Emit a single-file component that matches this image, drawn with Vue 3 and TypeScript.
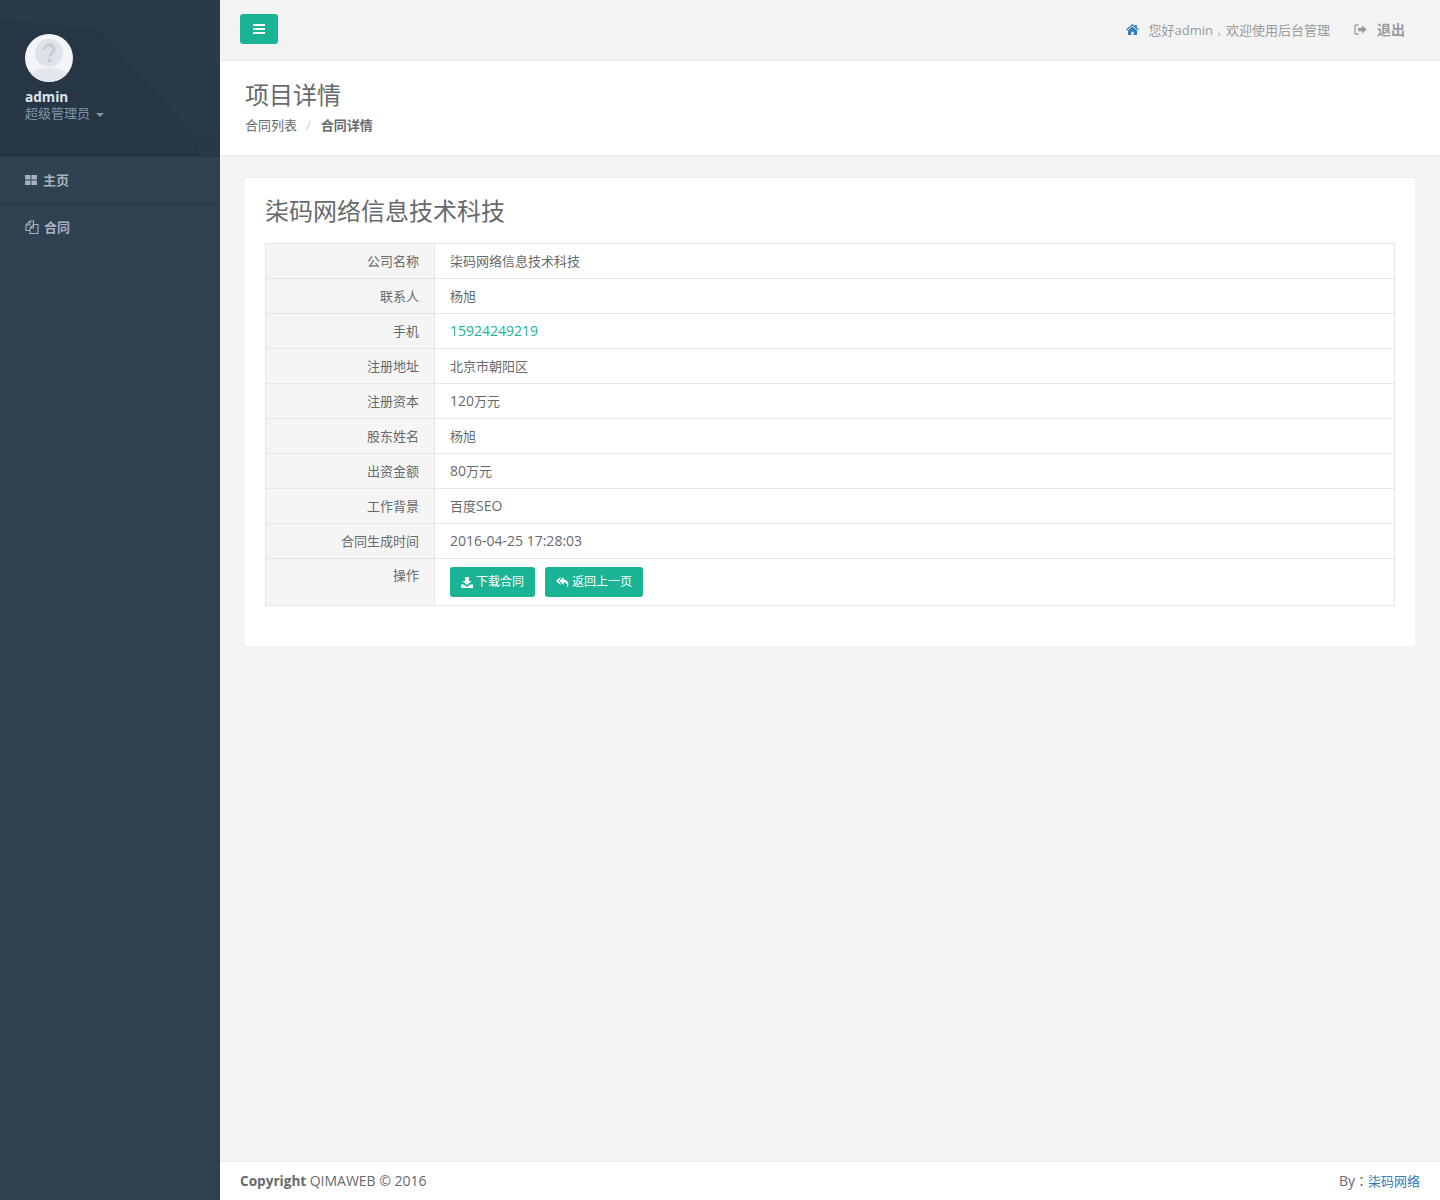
<script setup lang="ts">
interface Row { label: string; value: string; link?: boolean }
const rows: Row[] = [
  { label: '公司名称', value: '柒码网络信息技术科技' },
  { label: '联系人', value: '杨旭' },
  { label: '手机', value: '15924249219', link: true },
  { label: '注册地址', value: '北京市朝阳区' },
  { label: '注册资本', value: '120万元' },
  { label: '股东姓名', value: '杨旭' },
  { label: '出资金额', value: '80万元' },
  { label: '工作背景', value: '百度SEO' },
  { label: '合同生成时间', value: '2016-04-25 17:28:03' },
]
const parts = (s: string): { text: string; latin: boolean }[] =>
  s.split(/([\x00-\x7f]+)/).filter(Boolean).map((text) => ({ text, latin: /^[\x00-\x7f]/.test(text) }))
</script>

<template>
  <div class="shell">
    <aside class="sidebar">
      <div class="profile">
        <svg class="pattern" width="220" height="157" viewBox="0 0 220 157">
          <polygon points="0,0 220,0 220,157 0,157" fill="#273847" />
          <polygon points="0,0 130,0 97,29 0,20" fill="#293b4a" />
          <polygon points="130,0 220,0 220,130 195,135 97,29" fill="#293b4a" />
          <polygon points="97,29 195,135 200,157 0,157 0,20" fill="#263645" />
        </svg>
        <svg class="avatar" width="48" height="48" viewBox="0 0 48 48">
          <defs><clipPath id="av"><circle cx="24" cy="24" r="24" /></clipPath></defs>
          <g clip-path="url(#av)">
            <rect width="48" height="48" fill="#f4f5f7" />
            <ellipse cx="24" cy="48" rx="22" ry="14" fill="#e3e6ea" />
            <circle cx="24" cy="19" r="14" fill="#dfe2e8" />
            <path d="M19.500 15.500c0-6 9.500-6 9.500 0 0 3.500-4 3.500-4 7" fill="none" stroke="#c5cad3" stroke-width="3" />
            <circle cx="24.500" cy="26.500" r="2" fill="#c5cad3" />
          </g>
        </svg>
        <div class="name">admin</div>
        <div class="role">超级管理员<span class="caret"></span></div>
      </div>
      <nav>
        <a class="item">
          <svg width="12" height="10" viewBox="0 0 13 11" class="ic ic-grid"><path d="M0 0h6v5H0zM7 0h6v5H7zM0 6h6v5H0zM7 6h6v5H7z" fill="#a7b1c2" /></svg>
          <span>主页</span>
        </a>
        <a class="item">
          <svg width="14" height="14" viewBox="0 0 14 14" class="ic ic-wide"><path d="M4.500 10.500H1V5l4-4h3.500v3M1 5h4V1" fill="none" stroke="#a7b1c2" stroke-width="1.100" /><path d="M5 13.500V8l3.500-3.500H13v9zM5 8h3.500V4.500" fill="none" stroke="#a7b1c2" stroke-width="1.100" /></svg>
          <span>合同</span>
        </a>
      </nav>
    </aside>

    <div class="main">
      <header class="topbar">
        <button class="menu-btn" aria-label="menu">
          <svg width="12" height="10" viewBox="0 0 12 10"><path d="M0 0h12v2H0zM0 4h12v2H0zM0 8h12v2H0z" fill="#fff" /></svg>
        </button>
        <div class="top-right">
          <svg width="13" height="11" viewBox="0 0 13 11"><path d="M6.500 0 0 5.500l.8.900L6.500 1.700l5.700 4.700.8-.9-2.200-1.900V1H9v1.300zM2 6.500V11h3.300V7.800h2.400V11H11V6.500L6.500 2.800z" fill="#337ab7" /></svg>
          <span class="welcome">您好admin<span class="comma">，</span>欢迎使用后台管理</span>
          <svg class="out-ic" width="13" height="11" viewBox="0 0 13 11"><path d="M4.500 1H2Q1 1 1 2v7q0 1 1 1h2.500" fill="none" stroke="#999c9e" stroke-width="1.300" /><path d="M4 3.800h4V1.200l4.600 4.300L8 9.800V7.200H4z" fill="#999c9e" /></svg>
          <span class="logout">退出</span>
        </div>
      </header>

      <section class="heading">
        <h2>项目详情</h2>
        <div class="crumbs">
          <span>合同列表</span><span class="sep">/</span><strong>合同详情</strong>
        </div>
      </section>

      <section class="content">
        <div class="card">
          <h3>柒码网络信息技术科技</h3>
          <table>
            <tbody>
              <tr v-for="r in rows" :key="r.label">
                <th>{{ r.label }}</th>
                <td><span :class="{ link: r.link }"><span v-for="(p, i) in parts(r.value)" :key="i" :class="{ lat: p.latin }">{{ p.text }}</span></span></td>
              </tr>
              <tr class="actions">
                <th>操作</th>
                <td>
                  <div class="btns">
                    <button class="btn">
                      <svg width="12" height="11" viewBox="0 0 12 11"><path d="M4 0h4v4h2.500L6 8 1.500 4H4zM0 7.500h2.800L6 10l3.200-2.500H12V11H0z" fill="#fff" /></svg>
                      下载合同
                    </button>
                    <button class="btn">
                      <svg width="13" height="11" viewBox="0 0 13 11"><path d="M4.500 0 0 4l4.500 4V6.500L2.500 4l2-2.500zM7.500 0 3.500 4l4 4V5.500c2.700 0 4 1.500 4 5.500 2-5 .5-8-4-8.500z" fill="#fff" /></svg>
                      返回上一页
                    </button>
                  </div>
                </td>
              </tr>
            </tbody>
          </table>
        </div>
      </section>

      <footer class="footer">
        <div><strong>Copyright</strong> <span class="lat">QIMAWEB © 2016</span></div>
        <div><span class="lat">By</span><span class="tc">：</span><span class="by">柒码网络</span></div>
      </footer>
    </div>
  </div>
</template>

<style>
html, body { margin: 0; padding: 0; background: #f3f3f4; }
</style>

<style scoped>
* { box-sizing: border-box; }
.shell {
  display: flex;
  min-height: 1200px;
  font-family: "Open Sans", "Noto Sans CJK SC", sans-serif;
  font-size: 13px;
  color: #676a6c;
  background: #f3f3f4;
}
.lat { font-size: 14px; }
.tc { font-family: "Noto Sans CJK TC", sans-serif; }
.sidebar { width: 220px; flex: none; background: #2f4050; }
.profile { position: relative; height: 157px; padding: 34px 25px 0; overflow: hidden; }
.pattern { position: absolute; left: 0; top: 0; }
.avatar, .name, .role { position: relative; display: block; }
.name { margin-top: 7px; height: 16px; line-height: 16px; font-size: 13.600px; font-weight: 700; color: #dfe4ed; }
.role { height: 18px; margin-top: -1px; line-height: 18px; color: #8095a8; font-size: 13px; }
.caret {
  display: inline-block; margin-left: 6px; vertical-align: middle;
  border-left: 4px solid transparent; border-right: 4px solid transparent; border-top: 4px solid #8095a8;
}
.item {
  display: flex; align-items: center; height: 47px; padding: 0 0 2px 25px;
  border-bottom: 1px solid #293846; color: #a7b1c2; font-weight: 600; font-size: 13px;
}
.item:last-child { border-bottom: 0; }
.ic { margin-right: 6px; }
.ic-grid { margin-top: 2px; }
.ic-wide { margin-right: 5px; }
.main { flex: 1; min-width: 0; display: flex; flex-direction: column; }
.topbar {
  display: flex; align-items: center; justify-content: space-between;
  height: 61px; padding: 0 35px 2px 20px; border-bottom: 1px solid #e7eaec;
}
.menu-btn {
  display: flex; align-items: center; justify-content: center;
  width: 38px; height: 30px; padding: 0; border: 0; border-radius: 3px; background: #1ab394;
}
.top-right { display: flex; align-items: center; color: #999c9e; font-size: 13px; }
.welcome { margin-left: 10px; }
.comma { padding-left: 4px; font-size: 9px; }
.out-ic { margin-left: 24px; }
.logout { margin-left: 10px; font-weight: 600; font-size: 14px; }
.heading {
  height: 95px; padding: 19px 25px 0; background: #fff; border-bottom: 1px solid #e7eaec;
}
.heading h2 { margin: 0; font-size: 24px; line-height: 30px; font-weight: 400; color: #676a6c; }
.crumbs { margin-top: 6px; line-height: 18px; }
.sep { margin: 0 10px 0 9px; color: #ccc; }
.crumbs strong { font-weight: 700; }
.content { flex: 1; padding: 21px 25px 0; }
.card { height: 469px; padding: 20px 20px 0; background: #fff; border-top: 1px solid #e7eaec; }
.card h3 { margin: 0 0 19px; font-size: 24px; line-height: 26px; font-weight: 400; color: #676a6c; }
table { width: 100%; border-collapse: collapse; table-layout: fixed; }
th, td { height: 35px; border: 1px solid #e7e7e7; font-weight: 400; padding: 0 15px; line-height: 18px; }
th { width: 169px; text-align: right; background: #f5f5f5; }
td { text-align: left; }
.link { color: #1ab394; }
.actions th { vertical-align: top; padding-top: 7px; }
.actions td { height: 47px; }
.btns { display: flex; gap: 10px; }
.btn {
  display: flex; align-items: center; gap: 3px; height: 30px; padding: 0 11px;
  border: 0; border-radius: 3px; background: #1ab394; color: #fff;
  font: inherit; font-size: 12px;
}
.footer {
  display: flex; justify-content: space-between; align-items: center;
  height: 39px; padding: 0 20px 2px; background: #fff; border-top: 1px solid #e7eaec;
}
.footer strong { font-size: 13.600px; font-weight: 700; }
.by { color: #337ab7; }
</style>
